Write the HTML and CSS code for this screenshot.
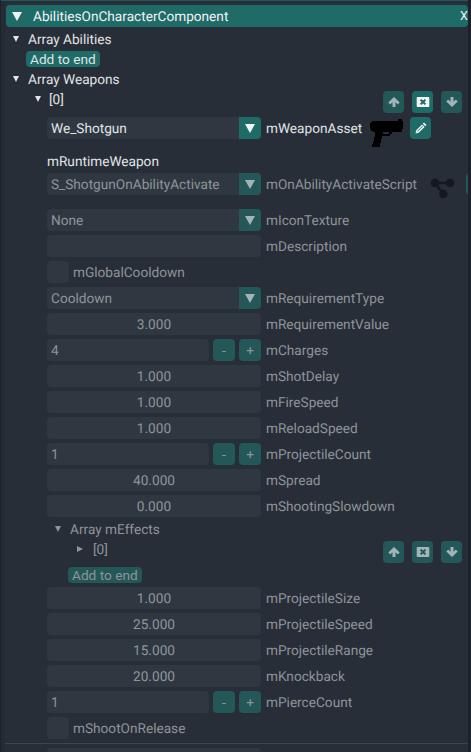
FILE: index.html
```html
<!DOCTYPE html>
<html lang="en">
<head>
    <meta charset="UTF-8">
    <meta name="viewport" content="width=device-width, initial-scale=1.0">
    <title>AbilitiesOnCharacterComponent</title>
    <link rel="stylesheet" href="styles.css">
</head>
<body>
    <div class="window">
        <div class="header">
            <span class="tri tri-big"></span>
            <span class="header-title">AbilitiesOnCharacterComponent</span>
            <span class="header-close">X</span>
        </div>

        <div class="node lvl-1"><span class="tri"></span>Array Abilities</div>
        <button class="add-btn add-1">Add to end</button>
        <div class="node lvl-1"><span class="tri"></span>Array Weapons</div>

        <div class="item-row lvl-2">
            <div class="node"><span class="tri"></span>[0]</div>
            <div class="item-btns">
                <button class="icon-btn">
                    <svg viewBox="0 0 14 14"><path d="M7 2 12.700 7.500 10.800 9.400 8.500 7.200V12h-3V7.200L3.200 9.400 1.300 7.500z"/></svg>
                </button>
                <button class="icon-btn on">
                    <svg viewBox="0 0 14 14"><path fill-rule="evenodd" d="M1.500 2h11q.8 0 .8.8v8.400q0 .8-.8.8h-11q-.8 0-.8-.8V2.800q0-.8.8-.8zM5.200 4 3.900 5.300 5.500 7 3.900 8.700 5.200 10 7 8.400 8.800 10l1.300-1.300L8.500 7l1.600-1.700L8.800 4 7 5.600z"/></svg>
                </button>
                <button class="icon-btn">
                    <svg viewBox="0 0 14 14"><path d="M7 12 12.700 6.500 10.800 4.600 8.500 6.800V2h-3v4.800L3.200 4.600 1.300 6.500z"/></svg>
                </button>
            </div>
        </div>

        <div class="fields">
            <div class="row row-tall">
                <div class="combo"><span class="combo-text">We_Shotgun</span><span class="combo-arrow"><span class="tri tri-big"></span></span></div>
                <span class="label label-asset">mWeaponAsset</span>
                <svg class="pistol" viewBox="0 0 34 32" shape-rendering="crispEdges">
                    <path fill-rule="evenodd" d="M2 4H28V2H32V4H33V12H32V15H22V17H20V19H12V22H11V26H10V30H2V27H3V24H4V20H5V15H3V14H1V12H0V6H1V5H2zM13 15V17H19V15z" fill="#000"/>
                </svg>
                <button class="icon-btn on pencil-btn">
                    <svg viewBox="0 0 14 14"><path fill-rule="evenodd" d="M10 1.500 12.500 4 11.300 5.200 8.800 2.700zM8.100 3.400 10.600 5.900 4.700 11.800 1.500 12.500 2.200 9.300zM8.300 5 3.400 9.900l.5.500L8.800 5.500z"/></svg>
                </button>
            </div>
            <div class="runtime">mRuntimeWeapon</div>

            <div class="dim fields">
                <div class="row row-tall">
                    <div class="combo"><span class="combo-text">S_ShotgunOnAbilityActivate</span><span class="combo-arrow"><span class="tri tri-big"></span></span></div>
                    <span class="label">mOnAbilityActivateScript</span>
                    <svg class="graph" viewBox="0 0 28 22">
                        <path d="M5 5h15M5 5l8.300 11" stroke="#15191f" stroke-width="2.500" fill="none"/>
                        <circle cx="5" cy="5" r="4.300" fill="#15191f"/>
                        <circle cx="20" cy="5" r="4.300" fill="#15191f"/>
                        <circle cx="13.300" cy="16" r="4.300" fill="#15191f"/>
                    </svg>
                    <span class="edge-btn"></span>
                </div>

                <div class="row">
                    <div class="combo"><span class="combo-text">None</span><span class="combo-arrow"><span class="tri tri-big"></span></span></div>
                    <span class="label">mIconTexture</span>
                </div>
                <div class="row"><div class="field"></div><span class="label">mDescription</span></div>
                <div class="row"><div class="check"></div><span class="check-label">mGlobalCooldown</span></div>
                <div class="row">
                    <div class="combo"><span class="combo-text">Cooldown</span><span class="combo-arrow"><span class="tri tri-big"></span></span></div>
                    <span class="label">mRequirementType</span>
                </div>
                <div class="row"><div class="field num">3.000</div><span class="label">mRequirementValue</span></div>
                <div class="row">
                    <div class="field-int">4</div><button class="step">-</button><button class="step">+</button>
                    <span class="label">mCharges</span>
                </div>
                <div class="row"><div class="field num">1.000</div><span class="label">mShotDelay</span></div>
                <div class="row"><div class="field num">1.000</div><span class="label">mFireSpeed</span></div>
                <div class="row"><div class="field num">1.000</div><span class="label">mReloadSpeed</span></div>
                <div class="row">
                    <div class="field-int">1</div><button class="step">-</button><button class="step">+</button>
                    <span class="label">mProjectileCount</span>
                </div>
                <div class="row"><div class="field num">40.000</div><span class="label">mSpread</span></div>
                <div class="row"><div class="field num">0.000</div><span class="label">mShootingSlowdown</span></div>

                <div class="node lvl-3"><span class="tri"></span>Array mEffects</div>
                <div class="item-row lvl-4">
                    <div class="node"><span class="tri tri-right"></span>[0]</div>
                    <div class="item-btns">
                        <button class="icon-btn">
                            <svg viewBox="0 0 14 14"><path d="M7 2 12.700 7.500 10.800 9.400 8.500 7.200V12h-3V7.200L3.200 9.400 1.300 7.500z"/></svg>
                        </button>
                        <button class="icon-btn">
                            <svg viewBox="0 0 14 14"><path fill-rule="evenodd" d="M1.500 2h11q.8 0 .8.8v8.400q0 .8-.8.8h-11q-.8 0-.8-.8V2.800q0-.8.8-.8zM5.200 4 3.900 5.300 5.500 7 3.900 8.700 5.200 10 7 8.400 8.800 10l1.300-1.300L8.500 7l1.600-1.700L8.800 4 7 5.600z"/></svg>
                        </button>
                        <button class="icon-btn">
                            <svg viewBox="0 0 14 14"><path d="M7 12 12.700 6.500 10.800 4.600 8.500 6.800V2h-3v4.800L3.200 4.600 1.300 6.500z"/></svg>
                        </button>
                    </div>
                </div>
                <button class="add-btn add-3">Add to end</button>

                <div class="row"><div class="field num">1.000</div><span class="label">mProjectileSize</span></div>
                <div class="row"><div class="field num">25.000</div><span class="label">mProjectileSpeed</span></div>
                <div class="row"><div class="field num">15.000</div><span class="label">mProjectileRange</span></div>
                <div class="row"><div class="field num">20.000</div><span class="label">mKnockback</span></div>
                <div class="row">
                    <div class="field-int">1</div><button class="step">-</button><button class="step">+</button>
                    <span class="label">mPierceCount</span>
                </div>
                <div class="row"><div class="check"></div><span class="check-label">mShootOnRelease</span></div>
            </div>
        </div>

        <div class="separator"></div>
        <div class="fields"><div class="row"><div class="field"></div></div></div>
    </div>
</body>
</html>
```

FILE: styles.css
```css
:root {
    --bg-color: #272e37;
    --field-color: #2f3841;
    --teal-color: #1f6b68;
    --teal-dim-color: #235758;
    --text-color: #e0e4e6;
    --text-dim-color: #8f9499;
}

html, body {
    margin: 0;
    padding: 0;
    height: 100%;
    overflow: hidden;
    background-color: #1c2229;
}

.window {
    box-sizing: border-box;
    width: 467px;
    height: 752px;
    margin-left: 1px;
    padding-left: 4px;
    overflow: hidden;
    display: flex;
    flex-direction: column;
    gap: 4px;
    background-color: var(--bg-color);
    border-top: 1px solid var(--teal-dim-color);
    box-shadow: inset 4px 0 0 #222c32;
    font-family: Roboto, "Liberation Sans", sans-serif;
    font-size: 13.65px;
    line-height: 16px;
    color: var(--text-color);
    text-rendering: geometricPrecision;
}

.window > *,
.fields > * {
    flex-shrink: 0;
}

button {
    font: inherit;
    color: inherit;
    border: none;
    padding: 0;
}

.header {
    display: flex;
    height: 22px;
    line-height: 24px;
    margin-top: 4px;
    margin-left: 1px;
    padding: 0 0 0 6px;
    background-color: var(--teal-color);
    border-radius: 4px;
    color: #f0f3f3;
}

.header-title {
    margin-left: 11px;
}

.header-close {
    margin-left: auto;
    width: 8px;
    font-size: 12.5px;
}

/* tree arrows */
.tri {
    display: inline-block;
    align-self: center;
    width: 0;
    height: 0;
    border-left: 3.500px solid transparent;
    border-right: 3.500px solid transparent;
    border-top: 6px solid currentColor;
}

.tri-big {
    border-left-width: 5px;
    border-right-width: 5px;
    border-top-width: 9px;
}

.node {
    display: flex;
    height: 16px;
    line-height: 18px;
}

.node .tri {
    margin-right: 8px;
}

.node .tri-right {
    border-top: 3.500px solid transparent;
    border-bottom: 3.500px solid transparent;
    border-left: 6px solid currentColor;
    border-right: none;
    margin-right: 10px;
}

.lvl-1 {
    padding-left: 8px;
}

.lvl-1 .tri,
.lvl-3 .tri {
    margin-right: 9px;
}

.lvl-2 {
    padding-left: 30px;
}

.lvl-3 {
    padding-left: 50px;
}

.lvl-4 {
    padding-left: 72px;
}

.add-btn {
    align-self: flex-start;
    height: 16px;
    padding: 0 4px;
    border-radius: 4px;
    background-color: var(--teal-color);
}

.add-1 {
    margin-left: 21px;
}

.item-row {
    display: flex;
    height: 22px;
}

.item-btns {
    display: flex;
    gap: 8px;
    margin-left: auto;
    margin-right: 6px;
}

.icon-btn {
    display: flex;
    align-items: center;
    justify-content: center;
    width: 21px;
    height: 22px;
    border-radius: 4px;
    background-color: var(--teal-dim-color);
}

.icon-btn svg {
    width: 14px;
    height: 14px;
    fill: #a3b4b6;
}

.icon-btn.on {
    background-color: var(--teal-color);
}

.icon-btn.on svg {
    fill: #f2f5f5;
}

.fields {
    display: flex;
    flex-direction: column;
    gap: 4px;
    margin-left: 42px;
}

.dim {
    margin-left: -42px;
    padding-left: 42px;
    color: var(--text-dim-color);
}

.dim > .node,
.dim > .item-row {
    margin-left: -42px;
}

.dim .add-btn {
    margin-left: 21px;
    background-color: var(--teal-dim-color);
}

.row {
    display: flex;
    height: 22px;
    line-height: 24px;
}

.row-tall {
    height: 32px;
}

.field,
.combo {
    box-sizing: border-box;
    width: 214px;
    height: 22px;
    background-color: var(--field-color);
    border-radius: 4px;
    flex-shrink: 0;
}

.num {
    text-align: center;
}

.combo {
    display: flex;
    overflow: hidden;
}

.combo-text {
    flex: 1;
    padding-left: 4px;
}

.combo-arrow {
    display: flex;
    align-items: center;
    justify-content: center;
    width: 22px;
    background-color: var(--teal-color);
    color: #f2f5f5;
}

.dim .combo-arrow {
    background-color: var(--teal-dim-color);
    color: #a3b4b6;
}

.label {
    margin-left: 5px;
    white-space: nowrap;
}

.label-asset {
    width: 104px;
}

.field-int {
    box-sizing: border-box;
    width: 162px;
    height: 22px;
    padding-left: 4px;
    background-color: var(--field-color);
    border-radius: 4px;
}

.step {
    width: 22px;
    height: 22px;
    line-height: 22px;
    margin-left: 4px;
    border-radius: 4px;
    background-color: var(--teal-dim-color);
}

.check {
    width: 22px;
    height: 22px;
    background-color: var(--field-color);
    border-radius: 4px;
}

.check-label {
    margin-left: 4px;
}

.runtime {
    height: 16px;
    line-height: 18px;
}

.pistol {
    width: 34px;
    height: 32px;
    flex-shrink: 0;
}

.pencil-btn {
    margin-left: 6px;
    flex-shrink: 0;
}

.graph {
    width: 28px;
    height: 22px;
    margin-left: 13px;
    margin-top: 5px;
    flex-shrink: 0;
}

.edge-btn {
    width: 22px;
    height: 22px;
    margin-left: 8px;
    border-radius: 4px;
    background-color: var(--teal-dim-color);
    flex-shrink: 0;
}

.separator {
    height: 1px;
    background-color: #3a4650;
}
```
